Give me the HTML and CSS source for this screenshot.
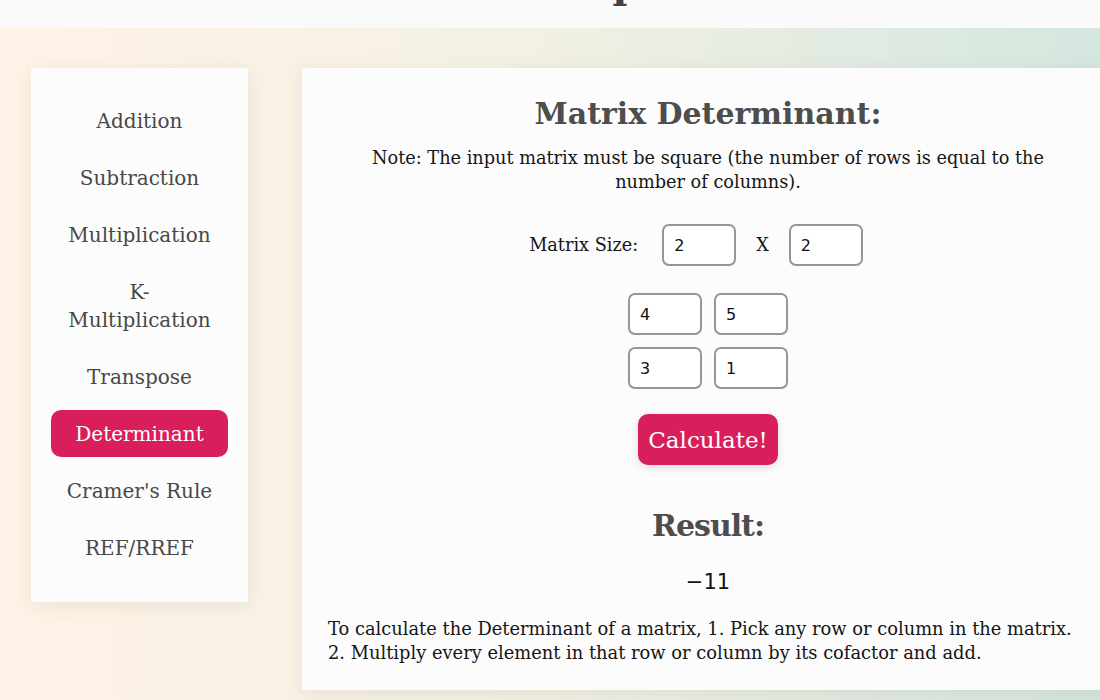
FILE: index.html
```html
<!DOCTYPE html>
<html lang="en">
<head>
<meta charset="utf-8">
<title>Matrix Determinant</title>
<link rel="stylesheet" href="styles.css">
</head>
<body>
<header class="topbar">
  <h1 class="site-title">Matrix Operations</h1>
</header>
<div class="layout">
  <nav class="sidebar">
    <a class="nav-item" href="#">Addition</a>
    <a class="nav-item" href="#">Subtraction</a>
    <a class="nav-item" href="#">Multiplication</a>
    <a class="nav-item" href="#">K-<br>Multiplication</a>
    <a class="nav-item" href="#">Transpose</a>
    <a class="nav-item active" href="#">Determinant</a>
    <a class="nav-item" href="#">Cramer's Rule</a>
    <a class="nav-item" href="#">REF/RREF</a>
  </nav>
  <main class="panel">
    <h2 class="panel-title">Matrix Determinant:</h2>
    <p class="note">Note: The input matrix must be square (the number of rows is equal to the number of columns).</p>
    <div class="size-row">
      <span class="size-label">Matrix Size:</span>
      <input class="cell" type="text" value="2">
      <span class="times">X</span>
      <input class="cell last" type="text" value="2">
    </div>
    <div class="matrix">
      <input class="cell" type="text" value="4">
      <input class="cell" type="text" value="5">
      <input class="cell" type="text" value="3">
      <input class="cell" type="text" value="1">
    </div>
    <button class="calc-btn" type="button">Calculate!</button>
    <h2 class="result-title">Result:</h2>
    <div class="result-value">−11</div>
    <p class="explain">To calculate the Determinant of a matrix, 1. Pick any row or column in the matrix. 2. Multiply every element in that row or column by its cofactor and add.</p>
  </main>
</div>
</body>
</html>
```

FILE: styles.css
```css
html, body {
  margin: 0;
  padding: 0;
  overflow-x: hidden;
}

body {
  font-family: "DejaVu Serif", "Liberation Serif", serif;
  color: #484848;
  min-height: 100vh;
  background: linear-gradient(90deg, #fef3e6 0%, #f4f1e4 45%, #d4e7df 100%);
}

.topbar {
  height: 28px;
  background: #fafafa;
  overflow: hidden;
  display: flex;
  justify-content: center;
}

.site-title {
  margin: -36px 0 0 140px;
  font-size: 40px;
  line-height: 40px;
  font-weight: bold;
  color: #444;
  white-space: nowrap;
}

.layout {
  display: flex;
  align-items: flex-start;
  gap: 54px;
  padding: 40px 0 40px 31px;
}

.sidebar {
  flex-shrink: 0;
  width: 177px;
  padding: 29px 20px 31px;
  background: #fcfcfc;
  box-shadow: 0 4px 18px rgba(120, 110, 80, 0.12);
  display: flex;
  flex-direction: column;
  gap: 10px;
}

.nav-item {
  display: block;
  text-align: center;
  text-decoration: none;
  color: #484848;
  font-size: 20px;
  line-height: 28px;
  padding: 9.5px 0;
  border-radius: 10px;
}

.nav-item.active {
  background: #d81f5c;
  color: #ffffff;
}

.panel {
  flex-shrink: 0;
  width: 760px;
  padding: 26px 26px 25px;
  background: #fcfcfc;
  box-shadow: 0 4px 18px rgba(120, 110, 80, 0.12);
  text-align: center;
}

.panel-title,
.result-title {
  margin: 0;
  font-size: 30px;
  line-height: 40px;
  font-weight: bold;
  color: #4d4d4d;
}

.note {
  max-width: 700px;
  margin: 12px auto 0;
  font-size: 17.7px;
  line-height: 24px;
  color: #151515;
}

.size-row {
  margin-top: 30px;
  display: flex;
  justify-content: center;
  align-items: center;
  height: 42px;
}

.size-label {
  font-size: 17.7px;
  line-height: 24px;
  color: #151515;
  margin-right: 24px;
}

.times {
  font-size: 17.7px;
  color: #151515;
  margin: 0 20px;
}

.cell {
  box-sizing: border-box;
  width: 74px;
  height: 42px;
  border: 2px solid #969696;
  border-radius: 7px;
  background: #ffffff;
  padding: 0 10px;
  font-family: "DejaVu Sans", sans-serif;
  font-size: 16px;
  color: #111;
  outline: none;
}

.cell.last {
  margin-right: 24px;
}

.matrix {
  margin: 27px auto 0;
  display: grid;
  grid-template-columns: 74px 74px;
  gap: 12px;
  justify-content: center;
}

.calc-btn {
  margin-top: 25px;
  height: 51px;
  padding: 0 10px;
  border: none;
  border-radius: 10px;
  background: #d81f5c;
  color: #ffffff;
  font-family: "DejaVu Serif", serif;
  font-size: 23px;
  box-shadow: 0 3px 10px rgba(0, 0, 0, 0.12);
  cursor: pointer;
}

.result-title {
  margin-top: 41px;
  letter-spacing: -1px;
}

.result-value {
  margin-top: 22px;
  font-family: "DejaVu Sans", sans-serif;
  font-size: 21px;
  line-height: 28px;
  color: #111;
}

.explain {
  margin: 21px 0 0;
  text-align: left;
  font-size: 17.85px;
  line-height: 24px;
  color: #151515;
}
```
